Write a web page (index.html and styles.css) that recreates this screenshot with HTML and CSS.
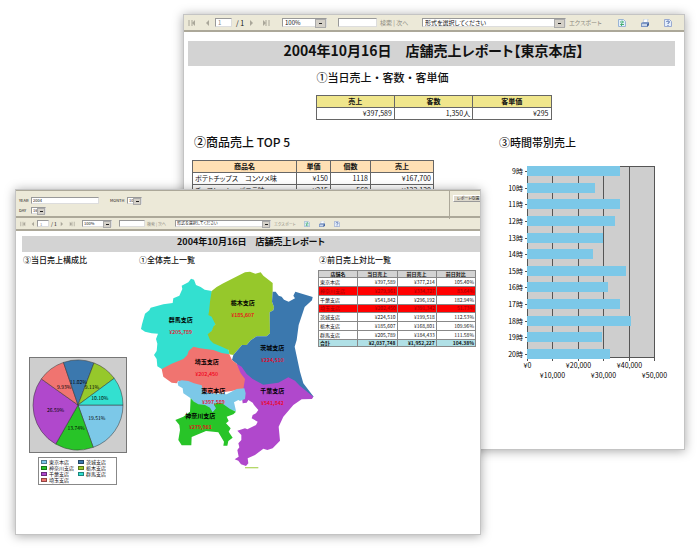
FILE: index.html
```html
<!DOCTYPE html>
<html lang="ja">
<head>
  <meta charset="UTF-8" />
  <meta name="viewport" content="width=device-width, initial-scale=1.0" />
  <title>店舗売上レポート</title>
  <link rel="stylesheet" href="styles.css">
</head>
<body>
  <!-- Shared toolbar icons -->
  <svg class="defs" width="0" height="0" aria-hidden="true">
    <symbol id="i-first" viewBox="0 0 8 8"><path d="M1 1v6M4 1v6" stroke="#aaa79a" fill="none"/><path d="M7 1v6L4 4z" fill="#aaa79a"/></symbol>
    <symbol id="i-prev" viewBox="0 0 8 8"><path d="M4 1v6L1 4z" fill="#aaa79a"/></symbol>
    <symbol id="i-next" viewBox="0 0 8 8"><path d="M1 1v6l3-3z" fill="#aaa79a"/></symbol>
    <symbol id="i-last" viewBox="0 0 8 8"><path d="M1 1v6l3-3z" fill="#aaa79a"/><path d="M4 1v6M7 1v6" stroke="#aaa79a" fill="none"/></symbol>
    <symbol id="i-refresh" viewBox="0 0 8 8"><path d="M.5.5h5l2 2v5h-7z" fill="#e4f0fb" stroke="#9ab4d4"/><path d="M2 3h3M4 1.500L5.500 3 4 4.500M6 5.500H3M4 4.500L2.500 5.500 4 7" stroke="#22a050" stroke-width=".8" fill="none"/></symbol>
    <symbol id="i-print" viewBox="0 0 8 8"><path d="M3 0h4L6 4H2z" fill="#fff" stroke="#9fb4d4" stroke-width=".5"/><path d="M0 4l2-1h6v3L6 8H0z" fill="#7d97c4"/><path d="M1 5h5v2H1z" fill="#c9d6ea"/><path d="M6 5l2-1v2L6 8z" fill="#44639c"/></symbol>
    <symbol id="i-help" viewBox="0 0 8 8"><path d="M.5.5h5l2 2v5h-7z" fill="#e4eefb" stroke="#9aaad0"/><path d="M2.500 3q0-1 1.500-1t1.500 1q0 .8-1.500 1.200v.8M4 6v1" stroke="#35549c" stroke-width=".8" fill="none"/></symbol>
  </svg>

  <main class="desk">
    <section class="window back">
      <div class="toolbar">
        <button aria-label="最初"><svg><use href="#i-first"/></svg></button>
        <button aria-label="前へ"><svg><use href="#i-prev"/></svg></button>
        <input class="page" type="text" value="1" aria-label="ページ">
        <span class="total">/ 1</span>
        <button aria-label="次へ"><svg><use href="#i-next"/></svg></button>
        <button aria-label="最後"><svg><use href="#i-last"/></svg></button>
        <span class="combo zoom"><select aria-label="倍率"><option>100%</option></select></span>
        <input class="find" type="text" aria-label="検索文字">
        <span class="links"><a href="#">検索</a> | <a href="#">次へ</a></span>
        <span class="combo format"><select aria-label="形式"><option>形式を選択してください</option></select></span>
        <a class="export" href="#">エクスポート</a>
        <button aria-label="更新"><svg><use href="#i-refresh"/></svg></button>
        <button aria-label="印刷"><svg><use href="#i-print"/></svg></button>
        <button aria-label="ヘルプ"><svg><use href="#i-help"/></svg></button>
      </div>
      <div class="store-report">
        <h1>2004年10月16日　店舗売上レポート【東京本店】</h1>
        <div class="today">
          <h2>①当日売上・客数・客単価</h2>
          <table class="summary">
            <thead><tr><th>売上</th><th>客数</th><th>客単価</th></tr></thead>
            <tbody><tr><td>¥397,589</td><td>1,350人</td><td>¥295</td></tr></tbody>
          </table>
        </div>
        <div class="columns">
          <div>
            <h2 class="top-title">②商品売上 TOP 5</h2>
            <table class="products">
              <thead><tr><th class="name">商品名</th><th class="price">単価</th><th class="count">個数</th><th>売上</th></tr></thead>
              <tbody>
                <tr><td>ポテトチップス　コンソメ味</td><td>¥150</td><td>1118</td><td>¥167,700</td></tr>
                <tr><td>チョコレート　バニラ味</td><td>¥215</td><td>568</td><td>¥122,120</td></tr>
              </tbody>
            </table>
          </div>
          <div>
            <h2>③時間帯別売上</h2>
            <svg class="hours" id="hours" viewBox="0 0 176 228"></svg>
          </div>
        </div>
      </div>
    </section>

    <section class="window front">
      <form class="params">
        <div class="fields">
          <div class="field-row">
            <label for="year">YEAR</label>
            <input id="year" type="text" value="2004">
            <label class="month" for="month">MONTH</label>
            <span class="combo"><select id="month"><option>10</option></select></span>
          </div>
          <div class="field-row">
            <label for="day">DAY</label>
            <span class="combo"><select id="day"><option>16</option></select></span>
          </div>
        </div>
        <div class="submit"><button type="button">レポートの選</button></div>
      </form>
      <div class="toolbar small">
        <button aria-label="最初"><svg><use href="#i-first"/></svg></button>
        <button aria-label="前へ"><svg><use href="#i-prev"/></svg></button>
        <input class="page" type="text" value="1" aria-label="ページ">
        <span class="total">/ 1</span>
        <button aria-label="次へ"><svg><use href="#i-next"/></svg></button>
        <button aria-label="最後"><svg><use href="#i-last"/></svg></button>
        <span class="combo zoom"><select aria-label="倍率"><option>100%</option></select></span>
        <input class="find" type="text" aria-label="検索文字">
        <span class="links"><a href="#">検索</a> | <a href="#">次へ</a></span>
        <span class="combo format"><select aria-label="形式"><option>形式を選択してください</option></select></span>
        <a class="export" href="#">エクスポート</a>
        <button aria-label="更新"><svg><use href="#i-refresh"/></svg></button>
        <button aria-label="印刷"><svg><use href="#i-print"/></svg></button>
        <button aria-label="ヘルプ"><svg><use href="#i-help"/></svg></button>
      </div>
      <div class="all-report">
        <h1>2004年10月16日　店舗売上レポート</h1>
        <div class="panels">
          <div>
            <h2>③当日売上構成比</h2>
            <svg class="pie" id="pie" viewBox="0 0 100 98"></svg>
            <ul class="legend" id="legend"></ul>
          </div>
          <div>
            <h2>①全体売上一覧</h2>
            <svg class="map" viewBox="24 9 534 603">
              <path fill="#33e0d0" d="M245 78L224 74 212 66 198 60 192 44 183 41 175 52 155 62 157 72 148 92 130 100 128 114 100 118 62 128 58 136 45 146 36 178 33 192 45 200 65 205 84 206 78 222 82 236 80 258 72 270 80 282 82 304 95 312 200 300 298 268 296 255 245 200 256 178z"/>
              <path fill="#96c82b" d="M245 78L260 66 280 55 345 22 360 20 376 26 392 22 400 32 428 54 428 80 426 110 432 126 430 136 419 142 420 205 410 214 380 214 362 226 350 240 336 240 310 270 298 268 296 255 275 245 250 235 240 225 233 208 245 198 250 185 256 178 250 166 245 155 235 150 237 140 240 110z"/>
              <path fill="#3b78ae" d="M428 80L437 80 446 92 455 95 462 104 476 110 495 100 490 92 496 80 548 96 546 106 524 126 506 180 500 225 494 245 510 320 520 355 551 395 540 400 400 380 340 330 320 296 306 285 310 270 336 240 350 240 362 226 380 214 410 214 420 205 419 142 430 136 432 126 426 110z"/>
              <path fill="#b048cc" d="M320 296L335 305 350 327 368 342 400 359 445 353 475 337 495 347 510 363 550 395 546 402 515 403 490 420 460 455 446 485 450 527 428 550 412 555 400 551 375 570 353 580 355 595 348 603 333 598 325 587 314 583 326 575 322 555 328 547 325 535 334 525 334 510 322 497 345 490 352 493 378 480 383 470 365 460 368 450 378 445 385 435 372 420 368 413 355 405 350 413 338 415 330 350z"/>
              <path fill="#f07470" d="M95 312L125 296 160 282 172 270 176 258 190 245 210 250 250 255 275 264 298 268 306 285 320 296 332 325 345 342 340 372 230 390 175 353 145 347 140 355 125 353 100 335z"/>
              <path fill="#7cc8e8" d="M142 350L155 346 175 348 192 355 215 361 220 378 235 384 290 388 320 372 343 370 347 385 345 402 330 408 325 405 312 412 318 438 300 436 255 445 205 424 180 398 160 385 158 370 145 362z"/>
              <path fill="#28c428" d="M182 400L192 410 205 418 225 420 240 428 248 442 258 430 252 420 258 414 275 414 300 432 318 440 310 448 290 455 296 468 288 475 302 490 296 500 308 518 295 528 292 542 280 542 282 530 265 502 228 498 185 516 184 541 155 541 145 525 150 495 148 480 136 465 160 455 180 440z"/>
              <path stroke="#b5d86a" stroke-width="4" d="M345 608h40"/>
              <g class="store">
                <text x="338" y="120">栃木支店</text>
                <text x="152" y="170">群馬支店</text>
                <text x="427" y="255">茨城支店</text>
                <text x="230" y="297">埼玉支店</text>
                <text x="250" y="385">東京本店</text>
                <text x="427" y="384">千葉支店</text>
                <text x="211" y="458">神奈川支店</text>
              </g>
              <g class="amount">
                <text x="338" y="156">¥185,607</text>
                <text x="152" y="207">¥205,789</text>
                <text x="427" y="291">¥224,510</text>
                <text x="230" y="332">¥202,450</text>
                <text x="250" y="417">¥397,589</text>
                <text x="427" y="420">¥541,842</text>
                <text x="211" y="493">¥279,961</text>
              </g>
            </svg>
          </div>
          <div>
            <h2>②前日売上対比一覧</h2>
            <table class="compare">
              <thead><tr><th>店舗名</th><th>当日売上</th><th>前日売上</th><th>前日対比</th></tr></thead>
              <tbody>
                <tr><td>東京本店</td><td>¥397,589</td><td>¥377,214</td><td>105.40%</td></tr>
                <tr class="down"><td>神奈川支店</td><td>¥279,961</td><td>¥334,727</td><td>83.64%</td></tr>
                <tr><td>千葉支店</td><td>¥541,842</td><td>¥296,192</td><td>182.94%</td></tr>
                <tr class="down"><td>埼玉支店</td><td>¥202,450</td><td>¥391,342</td><td>51.73%</td></tr>
                <tr><td>茨城支店</td><td>¥224,510</td><td>¥199,518</td><td>112.53%</td></tr>
                <tr><td>栃木支店</td><td>¥185,607</td><td>¥168,801</td><td>109.96%</td></tr>
                <tr><td>群馬支店</td><td>¥205,789</td><td>¥184,433</td><td>111.58%</td></tr>
              </tbody>
              <tfoot><tr><td>合計</td><td>¥2,037,748</td><td>¥1,952,227</td><td>104.38%</td></tr></tfoot>
            </table>
          </div>
        </div>
      </div>
    </section>
  </main>

  <script>
    // Sales per hour, 25.4 units = ¥10,000
    const hours = [93, 68, 93, 88, 76, 66, 99, 81, 93, 104, 75, 83];
    const x0 = 28, top0 = 14, bottom0 = 206;
    let chart = `<rect x="${x0}" y="${top0}" width="127" height="192" fill="#cecece"/>`;
    for (let i = 0; i <= 5; i++) {
      const x = Math.round(x0 + i * 25.4) + 0.5;
      chart += `<path d="M${x} ${top0}V${bottom0 + 3}" stroke="#555"/>`;
      chart += `<text class="mid" x="${x}" y="${i % 2 ? 226 : 216}">¥${(i * 10000).toLocaleString("en-US")}</text>`;
    }
    chart += `<path d="M${x0} ${top0 + 0.5}h127M${x0} ${bottom0 - 0.5}h127" stroke="#555"/>`;
    hours.forEach((w, i) => {
      const y = Math.round(top0 + i * 16.64);
      chart += `<rect x="${x0}" y="${y}" width="${w}" height="10" fill="#7cc8e8"/>`;
      chart += `<path d="M${x0 - 2} ${y + 5.5}h2" stroke="#555"/>`;
      chart += `<text class="end" x="${x0 - 4}" y="${y + 8}">${i + 9}時</text>`;
    });
    document.getElementById("hours").innerHTML = chart;

    const stores = [
      { name: "東京本店", pct: 19.51, color: "#7cc8e8" },
      { name: "神奈川支店", pct: 13.74, color: "#28c428" },
      { name: "千葉支店", pct: 26.59, color: "#b048cc" },
      { name: "埼玉支店", pct: 9.93, color: "#f07470" },
      { name: "茨城支店", pct: 11.02, color: "#3b78ae" },
      { name: "栃木支店", pct: 9.11, color: "#96c82b" },
      { name: "群馬支店", pct: 10.10, color: "#33e0d0" }
    ];
    const cx = 50, cy = 49, r = 45;
    const point = (a, d) => `${(cx + d * Math.cos(a)).toFixed(2)} ${(cy + d * Math.sin(a)).toFixed(2)}`;
    let angle = 0, slices = "", labels = "";
    stores.forEach(s => {
      const end = angle + s.pct / 100 * Math.PI * 2;
      const mid = (angle + end) / 2;
      slices += `<path d="M${cx} ${cy}L${point(angle, r)}A${r} ${r} 0 0 1 ${point(end, r)}z" fill="${s.color}" stroke="#333" stroke-width="0.5"/>`;
      const [lx, ly] = point(mid, 23).split(" ");
      labels += `<text x="${lx}" y="${+ly + 2}">${s.pct.toFixed(2)}%</text>`;
      angle = end;
    });
    document.getElementById("pie").innerHTML =
      `<rect x="1.5" y="1.5" width="97" height="95" fill="#cecece" stroke="#777"/>` + slices + labels;

    document.getElementById("legend").innerHTML = stores
      .map(s => `<li><span style="background:${s.color}"></span>${s.name}</li>`).join("");
  </script>
</body>
</html>
```

FILE: styles.css
```css
* {
  box-sizing: border-box;
}
body {
  margin: 0;
  background: #fff;
  color: #111;
  font-family: "Noto Sans CJK JP", sans-serif;
  font-feature-settings: "palt";
}
h1, h2, ul {
  margin: 0;
  padding: 0;
}
svg {
  display: block;
}
.defs {
  position: absolute;
}
a {
  color: inherit;
  text-decoration: none;
}
input, select, button {
  margin: 0;
  padding: 0;
  border: none;
  border-radius: 0;
  background: none;
  color: inherit;
  font: inherit;
  font-feature-settings: inherit;
}

/* The two report windows overlap in one grid cell */
.desk {
  display: grid;
  grid-template-columns: minmax(0, 1fr);
  align-items: start;
}
.window {
  grid-area: 1 / 1;
  background: #fff;
  border: 1px solid #c4c4c4;
  box-shadow: 0 1px 10px rgba(0, 0, 0, 0.35);
  overflow: hidden;
}
.back {
  margin: 14px 15px 0 183px;
}
.front {
  margin: 189px 219px 14px 15px;
}

/* Toolbar */
.toolbar {
  display: grid;
  grid-template-columns: 17px 10px 19px 15px 13px 20px 56px 42px 42px minmax(0, 1fr) 49px 23px 23px 8px;
  align-items: center;
  height: 17px;
  padding: 0 12px 0 4px;
  background: #ece9d8;
  border-bottom: 2px solid #aca899;
  font-size: 6px;
  line-height: 8px;
}
.toolbar button, .toolbar svg {
  width: 8px;
  height: 8px;
}
.toolbar input, .combo {
  height: 9px;
  background: #fff;
  border: 1px solid #999;
  border-right-color: #ddd;
  border-bottom-color: #ddd;
}
.toolbar .page {
  width: 17px;
  padding-left: 2px;
  color: #888;
}
.toolbar .find {
  width: 39px;
}
.total {
  padding-left: 2px;
  font-size: 7px;
}
.links, .export {
  color: #8c8a80;
  white-space: nowrap;
}
.combo {
  display: block;
  position: relative;
}
.combo select {
  display: block;
  appearance: none;
  width: 100%;
  height: 100%;
  padding-left: 2px;
  line-height: 7px;
}
.combo::after {
  content: "";
  position: absolute;
  top: 0;
  right: 0;
  width: 9px;
  height: 100%;
  background: linear-gradient(#222, #222) center / 3px 1px no-repeat, #d4d0c8;
  border: 1px solid #aaa;
  pointer-events: none;
}
.zoom {
  width: 45px;
}
.format {
  margin-right: 3px;
}
.small {
  grid-template-columns: 11px 6px 13px 10px 9px 13px 37px 28px 28px 99px 30px 15px 15px 6px;
  height: 13px;
  font-size: 4px;
  line-height: 6px;
}
.small button, .small svg {
  width: 6px;
  height: 6px;
}
.small input, .small .combo {
  height: 7px;
}
.small .page {
  width: 12px;
}
.small .find {
  width: 26px;
}
.small .zoom {
  width: 30px;
}
.small .total {
  padding-left: 1px;
  font-size: 5px;
}
.small .combo select, .params .combo select {
  padding-left: 1px;
  line-height: 5px;
}
.small .combo::after, .params .combo::after {
  width: 6px;
}

/* Store report */
.store-report {
  padding: 9px 9px 69px 4px;
}
.store-report h1 {
  padding: 0 0 7px 4px;
  background: #d3d3d3;
  font-size: 14px;
  line-height: 18px;
  text-align: center;
}
.store-report h2 {
  font-size: 11px;
  font-weight: 500;
  line-height: 20px;
}
.today {
  width: 240px;
  margin: 1px auto 0;
  padding-left: 4px;
}
.today h2 {
  padding-left: 1px;
  font-feature-settings: normal;
}
table {
  border-collapse: collapse;
  table-layout: fixed;
}
th, td {
  padding: 0 2px;
  border: 1px solid #666;
  text-align: right;
  white-space: nowrap;
}
th {
  text-align: center;
}
.summary, .products {
  font-size: 7px;
  line-height: 11px;
}
.summary {
  width: 100%;
  margin-top: 8px;
}
.summary th {
  background: #f0e68c;
}
.columns {
  display: grid;
  grid-template-columns: minmax(0, 1fr) 176px;
  margin-top: 12px;
}
.store-report .top-title {
  padding-left: 6px;
  font-size: 12px;
}
.products {
  width: 242px;
  margin: 8px 0 0 4px;
}
.products th {
  background: #ffe0b4;
}
.products td:first-child, .compare td:first-child {
  text-align: left;
}
.products .name {
  width: 104px;
}
.products .price {
  width: 34px;
}
.products .count {
  width: 40px;
}
.hours {
  width: 100%;
  font-size: 7px;
}
.hours .mid {
  text-anchor: middle;
}
.hours .end {
  text-anchor: end;
}

/* Parameter panel */
.params {
  display: grid;
  grid-template-columns: minmax(0, 1fr) 31px;
  height: 28px;
  background: #ece9d8;
  border-top: 1px solid #aca899;
  border-bottom: 2px solid #aca899;
  font-size: 4px;
  line-height: 6px;
}
.fields {
  padding: 4px 3px;
}
.field-row {
  display: flex;
  align-items: center;
  height: 10px;
}
.field-row label {
  width: 12px;
}
.field-row .month {
  width: 17px;
  margin-left: 11px;
}
.field-row input {
  width: 68px;
  height: 7px;
  padding-left: 1px;
  background: #fff;
  border: 1px solid #999;
  border-right-color: #ddd;
  border-bottom-color: #ddd;
}
.field-row .combo {
  width: 15px;
  height: 7px;
}
.submit {
  padding: 4px 0 0 3px;
  border-left: 1px solid #aca899;
}
.submit button {
  display: block;
  width: 100%;
  height: 7px;
  padding-left: 3px;
  background: #dcd8cc;
  border-top: 1px solid #fff;
  border-bottom: 1px solid #999;
  border-left: 1px solid #fff;
  line-height: 5px;
  text-align: left;
  white-space: nowrap;
}

/* All stores report */
.all-report {
  padding: 5px 0 49px 6px;
}
.all-report h1 {
  background: #d3d3d3;
  font-size: 9px;
  line-height: 12px;
  padding-bottom: 4px;
  text-align: center;
}
.all-report h2 {
  padding-left: 1px;
  font-size: 8px;
  font-weight: 500;
  line-height: 16px;
  white-space: nowrap;
}
.panels {
  display: grid;
  grid-template-columns: 116px 180px minmax(0, 1fr);
}
.pie {
  width: 100px;
  margin: 88px 0 0 6px;
  font-size: 5px;
  text-anchor: middle;
}
.legend {
  display: grid;
  grid-template-rows: repeat(4, 6px);
  grid-auto-flow: column;
  grid-template-columns: 37px 1fr;
  width: 79px;
  margin: 3px 0 0 16px;
  padding: 1px 2px;
  border: 1px solid #888;
  list-style: none;
  font-size: 5px;
  line-height: 6px;
}
.legend li {
  display: flex;
  align-items: center;
  gap: 2px;
}
.legend span {
  width: 6px;
  height: 4px;
  border: 1px solid rgba(0, 0, 0, 0.4);
}
.map {
  width: 178px;
}
.map text {
  font-size: 18px;
  text-anchor: middle;
}
.store {
  font-weight: 700;
}
.map .amount text {
  fill: #f00018;
  font-size: 16px;
  font-weight: 500;
}
.compare {
  width: 158px;
  height: 77px;
  margin-top: 2px;
  font-size: 5px;
  line-height: 6px;
}
.compare th, .compare td {
  padding: 0 1px;
  border-color: #888;
}
.compare th {
  background: #d3d3d3;
}
.compare .down {
  background: #f00;
  color: #900;
}
.compare tfoot {
  background: #b0e0e6;
  font-weight: 700;
}
```
